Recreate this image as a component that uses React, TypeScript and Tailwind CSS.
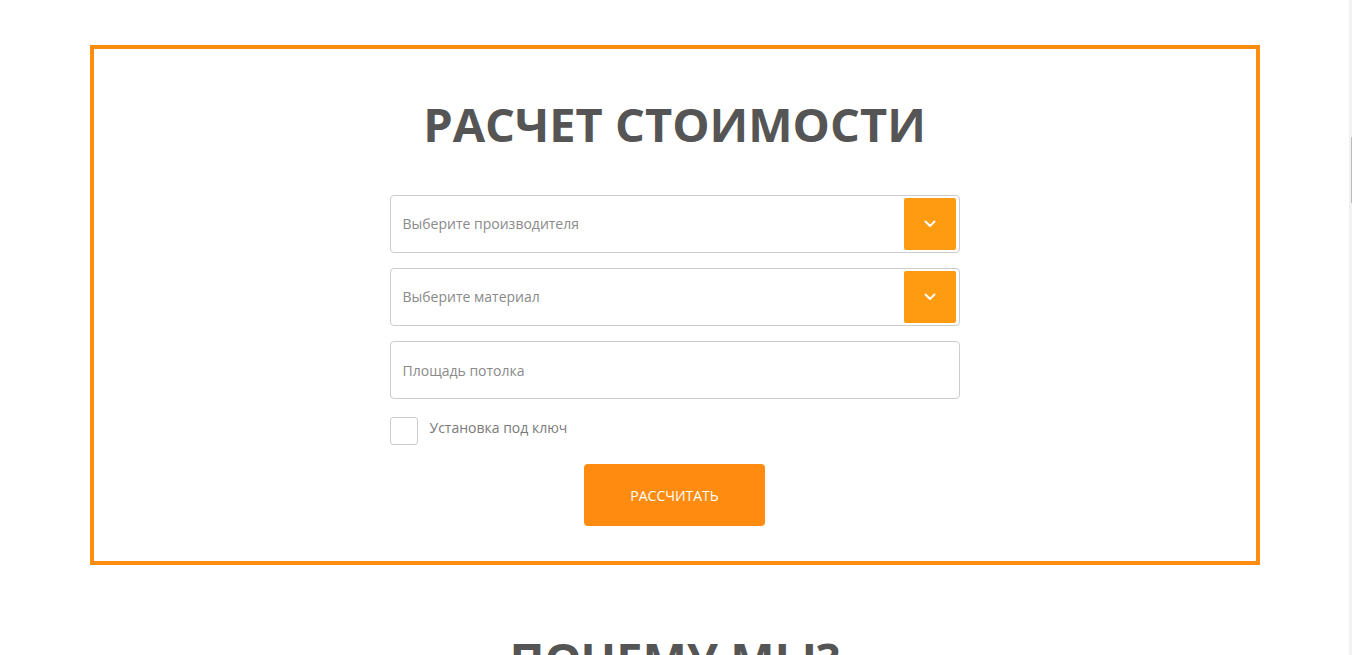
import React from 'react';

const font = { fontFamily: '"Open Sans", "Noto Sans", sans-serif' };

const Chevron: React.FC = () => (
  <svg width="12" height="8" viewBox="0 0 12 8" fill="none">
    <path d="M1.5 1.5L6 6L10.5 1.5" stroke="#ffffff" strokeWidth="2" strokeLinecap="round" strokeLinejoin="round" />
  </svg>
);

const SelectField: React.FC<{ placeholder: string }> = ({ placeholder }) => (
  <div className="flex h-[58px] w-full items-center rounded-[4px] border border-[#cccccc] bg-white pl-3 pr-[3px]">
    <span className="flex-1 pb-[2px] text-[14px] text-[#8a8a8a]">{placeholder}</span>
    <button className="flex h-[52px] w-[52px] items-center justify-center rounded-[2px] bg-[#ff9b10]">
      <Chevron />
    </button>
  </div>
);

export default function App() {
  return (
    <div className="flex h-[655px] w-full overflow-hidden bg-white" style={font}>
      <main className="flex flex-1 flex-col items-center pt-[45px]">
        <section className="flex w-[1170px] flex-col items-center border-4 border-[#ff8c0e] pt-[46px] pb-[35px]">
          <h1 className="text-[47px] leading-[58px] font-bold text-[#555555]">РАСЧЕТ СТОИМОСТИ</h1>
          <form className="mt-[42px] flex w-[570px] flex-col">
            <div className="flex flex-col gap-[15px]">
              <SelectField placeholder="Выберите производителя" />
              <SelectField placeholder="Выберите материал" />
              <div className="flex h-[58px] w-full items-center rounded-[4px] border border-[#cccccc] bg-white px-3">
                <span className="text-[14px] text-[#8a8a8a]">Площадь потолка</span>
              </div>
            </div>
            <label className="mt-[18px] flex items-start gap-3">
              <span className="h-[28px] w-[28px] rounded-[3px] border border-[#cccccc] bg-white" />
              <span className="text-[14px] leading-[22px] text-[#7a7a7a]">Установка под ключ</span>
            </label>
            <div className="mt-[19px] flex justify-center">
              <button
                type="button"
                className="h-[62px] w-[181px] rounded-[4px] bg-[#ff8c11] text-[14px] font-medium text-white uppercase"
              >
                Рассчитать
              </button>
            </div>
          </form>
        </section>
        <h2 className="mt-[65px] text-[47px] leading-[58px] font-bold text-[#555555]">ПОЧЕМУ МЫ?</h2>
      </main>
      <div className="w-[3px] bg-[#f1f1f1] pt-[137px]">
        <div className="ml-[2px] h-[66px] w-px bg-[#bdbdbd]" />
      </div>
    </div>
  );
}
